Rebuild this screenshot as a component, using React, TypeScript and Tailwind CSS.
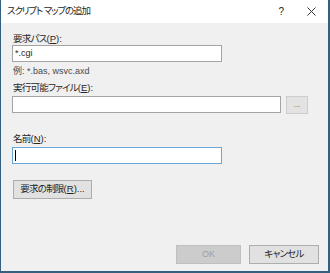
import React from "react";

const jp = "font-['Liberation_Sans','Noto_Sans_CJK_JP',sans-serif] [font-feature-settings:'palt']";
const kana = "tracking-[-0.08em]";

function Label({ text, k, rest }: { text: string; k: string; rest: string }) {
  return (
    <div className="h-[13px] leading-[13px] text-[9.5px] text-[#262626]">
      <span className={kana}>{text}</span>(<span className="underline">{k}</span>){rest}
    </div>
  );
}

export default function App() {
  return (
    <div className={`w-[330px] h-[273px] flex flex-col bg-[#f0f0f0] border-l border-r-2 border-b-2 border-[#34607f] ${jp}`}>
      <div className="h-[23px] bg-white flex items-center pl-[6px] text-[#262626]">
        <span className="text-[9.5px] tracking-[-0.12em]">スクリプト マップの追加</span>
        <span className="ml-auto mr-[23px] text-[10px] font-['Liberation_Sans',sans-serif]">?</span>
        <svg width="9" height="9" viewBox="0 0 9 9" className="mr-[12px]">
          <path d="M0.5 0.5 L8.5 8.5 M8.5 0.5 L0.5 8.5" stroke="#333" strokeWidth="1" />
        </svg>
      </div>
      <div className="flex-1 flex flex-col pl-[11px] pr-[9px] pt-[9px] pb-[7px]">
        <div className="pl-[1px]">
          <Label text="要求パス" k="P" rest=":" />
        </div>
        <div className="w-[210px] h-[17px] bg-white border border-[#a4a4a4] flex items-center pl-[2px] text-[9px] text-[#262626]">
          *.cgi
        </div>
        <div className="mt-[3px] pl-[1px] h-[13px] leading-[13px] text-[9px] text-[#4a4a4a]">例: *.bas, wsvc.axd</div>
        <div className="mt-[3px] pl-[1px]">
          <Label text="実行可能ファイル" k="E" rest=":" />
        </div>
        <div className="mt-[2px] flex items-start">
          <div className="w-[269px] h-[17px] bg-white border border-[#a4a4a4]" />
          <div className="ml-[5px] w-[22px] h-[18px] bg-[#e3e3e3] border border-[#cdcdcd] flex items-end justify-center pb-[4px] text-[8px] text-[#666] leading-none">
            ...
          </div>
        </div>
        <div className="mt-[18px] pl-[1px]">
          <Label text="名前" k="N" rest=":" />
        </div>
        <div className="mt-[2px] w-[210px] h-[17px] bg-white border border-[#6aa6d6] flex items-center pl-[2px]">
          <span className="w-px h-[11px] bg-black" />
        </div>
        <div className="mt-[16px] ml-[1px] w-[79px] h-[19px] bg-[#e1e1e1] border border-[#adadad] flex items-center justify-center text-[9.5px] text-[#262626]">
          <span className={kana}>要求の制限</span>(<span className="underline">R</span>)...
        </div>
        <div className="mt-auto flex justify-end gap-[8px]">
          <div className="w-[65px] h-[19px] bg-[#cccccc] border border-[#bfbfbf] flex items-center justify-center text-[9px] text-[#a0a0a0]">
            OK
          </div>
          <div className="w-[70px] h-[19px] bg-[#e1e1e1] border border-[#adadad] flex items-center justify-center text-[9.5px] text-[#262626]">
            <span className={kana}>キャンセル</span>
          </div>
        </div>
      </div>
    </div>
  );
}
